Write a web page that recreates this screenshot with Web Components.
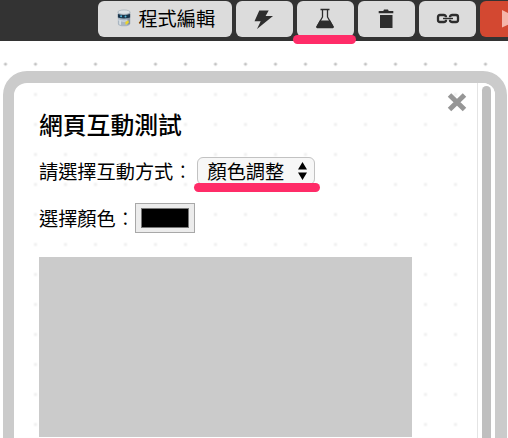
<!DOCTYPE html>
<html lang="zh-Hant">
<head>
<meta charset="utf-8">
<title>網頁互動測試</title>
<style>
html,body{margin:0;height:438px;overflow:hidden;background:#fff}
body{font-family:"Noto Sans CJK TC",sans-serif;color:#000}
.colon{font-weight:300}
</style>
</head>
<body>
<app-shell>
  <tool-bar slot="bar">
    <tool-button class="wide"><tool-icon name="robot"></tool-icon><span>程式編輯</span></tool-button>
    <tool-button><tool-icon name="bolt"></tool-icon></tool-button>
    <tool-button marked><tool-icon name="flask"></tool-icon></tool-button>
    <tool-button><tool-icon name="trash"></tool-icon></tool-button>
    <tool-button><tool-icon name="link"></tool-icon></tool-button>
    <tool-button class="run"><tool-icon name="play"></tool-icon></tool-button>
  </tool-bar>
  <dialog-panel>
    <span slot="title">網頁互動測試</span>
    <form-row>請選擇互動方式<span class="colon">：</span><select-box>顏色調整</select-box></form-row>
    <form-row class="second">選擇顏色<span class="colon">：</span><color-well></color-well></form-row>
    <preview-area></preview-area>
  </dialog-panel>
</app-shell>
<script>
const define = (name, html) => customElements.define(name, class extends HTMLElement {
  constructor() {
    super();
    this.attachShadow({ mode: 'open' }).innerHTML = html;
  }
});

const icons = {
  robot: [14, 18, 16, 20, `<path d="M1 3.5v13c0 4 14 4 14 0v-13" fill="#a9b5c1"/><path d="M1.5 12c3 2 10 2 13 0" fill="none" stroke="#d4dde5" stroke-width="1.5"/><path d="M12 4v14l3-1.5V4" fill="#8493a2"/><ellipse cx="8" cy="3.3" rx="7" ry="2.5" fill="#dde3e8" stroke="#9aa6b0" stroke-width=".7"/><path d="M1 5.5q7 2 14 0v4q-7 2.3-14 0z" fill="#18344b"/><circle cx="4.7" cy="8" r="1.1" fill="#55b9dc"/><circle cx="9.7" cy="8.2" r="1.1" fill="#55b9dc"/><path d="M2.5 13v4l2 1v-4.5z" fill="#d8e0e6"/><path d="M9.500 14.500l3.500-2 .5 3-3.500 2.500z" fill="#edd528"/>`],
  bolt: [20, 20, 20, 20, `<path d="M5.300 1.500h9.400L11.600 7H19L3 20l3.700-7.700H.5z" fill="#2d2d2d"/>`],
  flask: [20, 21, 20, 21, `<path d="M5.500 1.500h9M7.500 2v7L2 18.500q-.5 1.200 1 1.200h14q1.500 0 1-1.200L12.500 9V2" fill="none" stroke="#2d2d2d" stroke-width="1.3" stroke-linejoin="round"/><path d="M4.800 12.600h10.400l3.300 6q.5 1.400-1 1.400h-15q-1.500 0-1-1.400z" fill="#2d2d2d"/>`],
  trash: [16, 20, 16, 20, `<path d="M.7 2h4.600l.7-1.500h4L10.700 2h4.600v2.300H.7zM2 6h12.500v13H2z" fill="#2d2d2d"/>`],
  link: [24, 12, 24, 12, `<path d="M10 4.300V4q0-2-2.300-2H4Q2 2 2 4v3q0 2 2 2h3.700Q10 9 10 7v-.3M14 4.300V4q0-2 2.300-2H20q2 0 2 2v3q0 2-2 2h-3.700Q14 9 14 7v-.3" fill="none" stroke="#2d2d2d" stroke-width="2.300"/><path d="M7 5.500h10" stroke="#2d2d2d" stroke-width="1.400"/>`],
  play: [20, 20, 20, 20, `<path d="M1 1v17.500L19 10z" fill="#f5b5aa"/>`]
};
customElements.define('tool-icon', class extends HTMLElement {
  constructor() {
    super();
    const [w, h, vw, vh, art] = icons[this.getAttribute('name')];
    this.attachShadow({ mode: 'open' }).innerHTML =
      `<style>:host{display:block;flex:none}svg{display:block}</style><svg width="${w}" height="${h}" viewBox="0 0 ${vw} ${vh}">${art}</svg>`;
  }
});

define('app-shell', `<style>
:host{display:flex;flex-direction:column;height:438px;overflow:hidden}
main{flex:1;min-height:0;padding:30px 1px 0 3px;background:radial-gradient(circle at 15px 15px,#bdbdbd 0,#c4c4c4 1px,transparent 2px) -9.500px 8.200px/30px 30px}
</style><slot name="bar"></slot><main><slot></slot></main>`);

define('tool-bar', `<style>
:host{display:flex;box-sizing:border-box;height:41px;flex:none;gap:4px;padding:1px 0 4px 98px;background:#333;overflow:visible}
</style><slot></slot>`);

define('tool-button', `<style>
:host{display:flex;position:relative;box-sizing:border-box;flex:none;align-items:center;justify-content:center;width:57.200px;height:35.500px;border-radius:6px;background:#dcdcdc;font-size:19.200px;line-height:28px;white-space:nowrap}
:host(.wide){width:133.500px;gap:7px;padding:0 0 2px 3px}
:host(.run){background:#d34831;justify-content:flex-start;padding-left:21px}
:host([marked])::after{content:"";position:absolute;left:-4px;top:34px;width:63px;height:9px;border-radius:5px;background:#ff2c68}
</style><slot></slot>`);

define('dialog-panel', `<style>
:host{display:flex;box-sizing:border-box;height:400px;border:12px solid #cbcbcb;border-left-width:11.500px;border-radius:24px;overflow:hidden;background:radial-gradient(circle at 15px 15px,#efefef 0,#f2f2f2 1px,transparent 2.500px) 6.500px -3.500px/30px 30px #fff}
section{flex:1;min-width:0;padding:21px 0 0 24.500px}
header{display:flex;height:43px}
h1{flex:1;margin:0;padding-left:.5px;font-size:23.800px;font-weight:500;line-height:40px}
svg{flex:none;margin:-13px 9px 0 0}
aside{box-sizing:border-box;flex:none;width:18px;padding:3px 4px 0;border-left:1px solid #e4e4e4;background:#fff}
i{display:block;height:500px;border-radius:5px;background:#bfbfbf}
</style><section><header><h1><slot name="title"></slot></h1><svg width="22" height="22" viewBox="0 0 22 22"><path d="M3.500 4l15 14.500M18.500 4l-15 14.500" stroke="#969696" stroke-width="5"/></svg></header><slot></slot></section><aside><i></i></aside>`);

define('form-row', `<style>
:host{display:flex;align-items:center;height:48px;padding-left:.5px;font-size:19.200px;line-height:28px;white-space:nowrap}
:host(.second){height:46px}
</style><slot></slot>`);

define('select-box', `<style>
:host{display:flex;position:relative;box-sizing:border-box;align-items:center;justify-content:space-between;width:118px;height:28px;margin-left:4px;padding:0 7px 0 10px;border:1px solid #c2c2c2;border-radius:6px;background:#f7f7f7;line-height:26px}
:host::after{content:"";position:absolute;left:-4px;top:25px;width:126px;height:8.500px;border-radius:5px;background:#ff2c68}
</style><slot></slot><svg width="9" height="18" viewBox="0 0 9 18"><path d="M0 7.500L4.500 0 9 7.500zM0 10.500L4.500 18 9 10.500z"/></svg>`);

define('color-well', `<style>
:host{display:block;box-sizing:border-box;width:60px;height:30px;border:1px solid #a8a8a8;padding:4px 5px;background:#ececec}
div{box-sizing:border-box;height:20px;border:1px solid #777;background:#000}
</style><div></div>`);

define('preview-area', `<style>
:host{display:block;box-sizing:border-box;width:373px;height:180px;margin-top:16px;background:#cbcbcb}
</style>`);
</script>
</body>
</html>
